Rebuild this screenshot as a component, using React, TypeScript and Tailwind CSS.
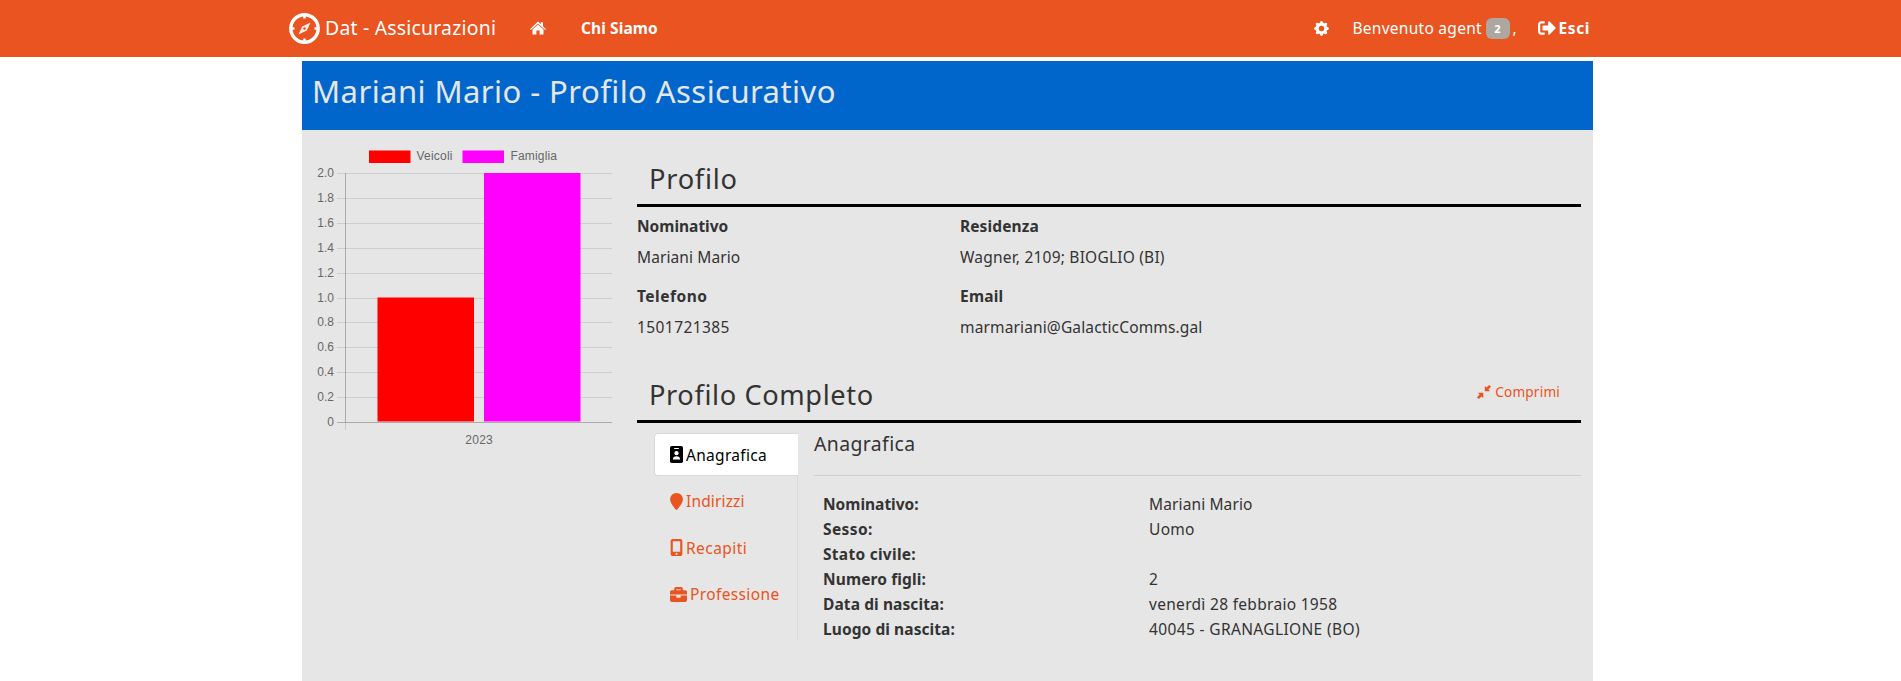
import type { ReactNode } from "react";
import { FaBriefcase, FaSignOutAlt } from "react-icons/fa";
import { FaLocationPin, FaMobileScreenButton } from "react-icons/fa6";
import { BsGearFill } from "react-icons/bs";

const CompassLogo = () => (
  <svg className="size-[31px] shrink-0" viewBox="0 0 31 31" fill="none" stroke="#fff">
    <circle cx="15.5" cy="15.5" r="13.7" strokeWidth="3.4" />
    <path d="M15.5 2v3.500M15.5 25.500v3.500M2 15.5h3.500M25.500 15.5h3.500" strokeWidth="2.400" />
    <path fillRule="evenodd" fill="#fff" fillOpacity=".9" stroke="none" d="M21.500 9.500l-3.700 8L9.500 21.500l3.700-8zM15.5 14.200a1.300 1.300 0 1 0 0 2.600a1.300 1.300 0 0 0 0-2.600z" />
  </svg>
);

const HomeIcon = () => (
  <svg className="h-[14px] w-4 shrink-0" viewBox="0 0 16 14" fill="currentColor">
    <path d="M8 .5L10.800 3.200V1.200H13V5.300L16 8.200L15.200 9L8 2.600L.8 9L0 8.200z" />
    <path d="M8 3.600L13.500 8.500V13.500H9.600V9.500H6.400V13.500H2.500V8.500z" />
  </svg>
);

const CompressIcon = () => (
  <svg className="size-[14px] shrink-0" viewBox="0 0 14 14" fill="currentColor">
    <path d="M7.800 6.300V1l1.700 1.600L12.200 0L14 1.800L11.400 4.500L13 6.300zM6.300 7.700V13l-1.700-1.600L1.800 14L0 12.200L2.600 9.500L1 7.700z" />
  </svg>
);

const PersonBadgeIcon = () => (
  <svg className="h-[17px] w-[13px] shrink-0" viewBox="0 0 13 17">
    <rect width="13" height="17" rx="1.800" fill="#000" />
    <rect x="4" y="2" width="5" height="1" rx=".5" fill="#fff" />
    <circle cx="6.500" cy="7.200" r="2.100" fill="#fff" />
    <path d="M2.900 13.600c0-2.400 1.400-3.400 3.600-3.400s3.600 1 3.600 3.400z" fill="#fff" />
  </svg>
);

const yTicks = ["0", "0.2", "0.4", "0.6", "0.8", "1.0", "1.2", "1.4", "1.6", "1.8", "2.0"];

const PolicyChart = () => (
  <svg className="h-[330px] w-[326px] shrink-0" viewBox="0 0 326 330" fontFamily="'Liberation Sans', Arial, sans-serif" fontSize="12" fill="#666">
    <rect x="67" y="20.500" width="41.500" height="12.500" fill="#f00" />
    <text x="114.500" y="30" textLength="36">Veicoli</text>
    <rect x="160.500" y="20.500" width="41.500" height="12.500" fill="#f0f" />
    <text x="208.500" y="30" textLength="46.500">Famiglia</text>
    {yTicks.map((label, i) => {
      const y = Math.round(292 - i * 24.900) + 0.5;
      return (
        <g key={label}>
          <line x1="35" x2="310" y1={y} y2={y} stroke={i === 0 ? "rgba(0,0,0,.25)" : "rgba(0,0,0,.1)"} />
          <text x="32" y={y + 3.500} textAnchor="end">{label}</text>
        </g>
      );
    })}
    <line x1="43.500" x2="43.500" y1="43" y2="292" stroke="rgba(0,0,0,.25)" />
    <line x1="43.500" x2="43.500" y1="292" y2="300" stroke="rgba(0,0,0,.12)" />
    <rect x="75.500" y="167.500" width="96.500" height="124" fill="#f00" />
    <rect x="182" y="43" width="96.500" height="248.500" fill="#f0f" />
    <text x="177" y="314" textAnchor="middle" textLength="27.500">2023</text>
  </svg>
);

const Field = ({ label, value, labelClass, valueClass }: { label: string; value: string; labelClass: string; valueClass: string }) => (
  <div>
    <div className={`font-bold ${labelClass}`}>{label}</div>
    <div className={`mt-[7px] ${valueClass}`}>{value}</div>
  </div>
);

const SectionTitle = ({ title, tracking, children }: { title: string; tracking: string; children?: ReactNode }) => (
  <div className="flex h-[47px] items-start justify-between border-b-[3px] border-black pl-[12px]">
    <h2 className={`pt-px text-[27.2px] leading-9 ${tracking}`}>{title}</h2>
    {children}
  </div>
);

const Tab = ({ icon, label, tracking, active = false }: { icon: ReactNode; label: string; tracking: string; active?: boolean }) => (
  <a
    className={`flex h-[43px] items-center pl-[15px] ${
      active ? "-mr-px rounded-l border border-r-0 border-[#d9d9d9] bg-white text-black" : "ml-px text-[#e95420]"
    }`}
  >
    {icon}
    <span className={`ml-[3px] ${tracking}`}>{label}</span>
  </a>
);

const details = [
  { label: "Nominativo:", value: "Mariani Mario", lt: "tracking-[0px]", vt: "tracking-[.12px]" },
  { label: "Sesso:", value: "Uomo", lt: "tracking-[.4px]", vt: "tracking-[.3px]" },
  { label: "Stato civile:", value: "", lt: "tracking-[.28px]", vt: "" },
  { label: "Numero figli:", value: "2", lt: "tracking-[.12px]", vt: "" },
  { label: "Data di nascita:", value: "venerdì 28 febbraio 1958", lt: "tracking-[.1px]", vt: "tracking-[.3px]" },
  { label: "Luogo di nascita:", value: "40045 - GRANAGLIONE (BO)", lt: "tracking-[.08px]", vt: "tracking-[.36px]" },
];

const Navbar = () => (
  <nav className="h-[57px] bg-[#e95420] text-white">
    <div className="ml-[289px] flex h-[56px] w-[1301px] items-center">
      <CompassLogo />
      <span className="ml-[5px] w-[205px] text-[19.4px] tracking-[.22px]">Dat - Assicurazioni</span>
      <HomeIcon />
      <span className="ml-[35px] font-bold tracking-[.1px]">Chi Siamo</span>
      <div className="ml-auto flex items-center">
        <BsGearFill className="size-[15px]" />
        <span className="ml-[24px] w-[133px] tracking-[.27px]">Benvenuto agent</span>
        <span className="flex h-[21px] w-6 items-center justify-center rounded-md bg-[#aea79f] pt-px text-[11px] font-bold">2</span>
        <span className="ml-[3px] w-[25px]">,</span>
        <FaSignOutAlt className="size-[18px]" />
        <span className="ml-[3px] font-bold tracking-[.6px]">Esci</span>
      </div>
    </div>
  </nav>
);

export default function App() {
  return (
    <div className="flex h-[681px] flex-col overflow-hidden bg-white font-['Noto_Sans',sans-serif] text-[15.5px] leading-6 text-[#333]">
      <Navbar />
      <main className="mt-1 ml-[302px] flex w-[1291px] flex-1 flex-col bg-[#e6e6e6]">
        <h1 className="h-[69px] bg-[#0066cc] pt-1.5 pl-[10px] text-[31px] leading-[48px] tracking-[.44px] text-[#e6e6e6]">
          Mariani Mario - Profilo Assicurativo
        </h1>
        <div className="flex">
          <PolicyChart />
          <div className="ml-[9px] w-[944px] pt-[30px]">
            <SectionTitle title="Profilo" tracking="tracking-[.75px]" />
            <div className="grid grid-cols-[323px_1fr] gap-y-[15px] pt-[7px]">
              <Field label="Nominativo" value="Mariani Mario" labelClass="tracking-[0px]" valueClass="tracking-[.1px]" />
              <Field label="Residenza" value="Wagner, 2109; BIOGLIO (BI)" labelClass="tracking-[.1px]" valueClass="tracking-[.21px]" />
              <Field label="Telefono" value="1501721385" labelClass="tracking-[.5px]" valueClass="tracking-[.42px]" />
              <Field label="Email" value="marmariani@GalacticComms.gal" labelClass="tracking-[.2px]" valueClass="tracking-[.14px]" />
            </div>
            <div className="mt-[37px]">
              <SectionTitle title="Profilo Completo" tracking="tracking-[.62px]">
                <a className="mr-[21px] flex items-center gap-1 pt-1 text-[13.6px] tracking-[.2px] text-[#e95420]">
                  <CompressIcon />
                  Comprimi
                </a>
              </SectionTitle>
            </div>
            <div className="flex">
              <div className="mt-[10px] ml-[17px] flex h-[208px] w-[144px] flex-col gap-[3.5px] border-r border-[#d9d9d9]">
                <Tab active icon={<PersonBadgeIcon />} label="Anagrafica" tracking="tracking-[.3px]" />
                <Tab icon={<FaLocationPin className="h-[17px] w-[13px]" />} label="Indirizzi" tracking="tracking-[.15px]" />
                <Tab icon={<FaMobileScreenButton className="h-[17px] w-[13px]" />} label="Recapiti" tracking="tracking-[.45px]" />
                <Tab icon={<FaBriefcase className="size-[17px]" />} label="Professione" tracking="tracking-[.37px]" />
              </div>
              <div className="ml-4 w-[767px] pt-[9px]">
                <h3 className="h-[44px] border-b border-[#cfcfcf] text-[19.4px] tracking-[.4px]">Anagrafica</h3>
                <dl className="grid grid-cols-[326px_1fr] pt-4 pl-[9px] leading-[25px]">
                  {details.map((d) => (
                    <div key={d.label} className="contents">
                      <dt className={`font-bold ${d.lt}`}>{d.label}</dt>
                      <dd className={d.vt}>{d.value}</dd>
                    </div>
                  ))}
                </dl>
              </div>
            </div>
          </div>
        </div>
      </main>
    </div>
  );
}
